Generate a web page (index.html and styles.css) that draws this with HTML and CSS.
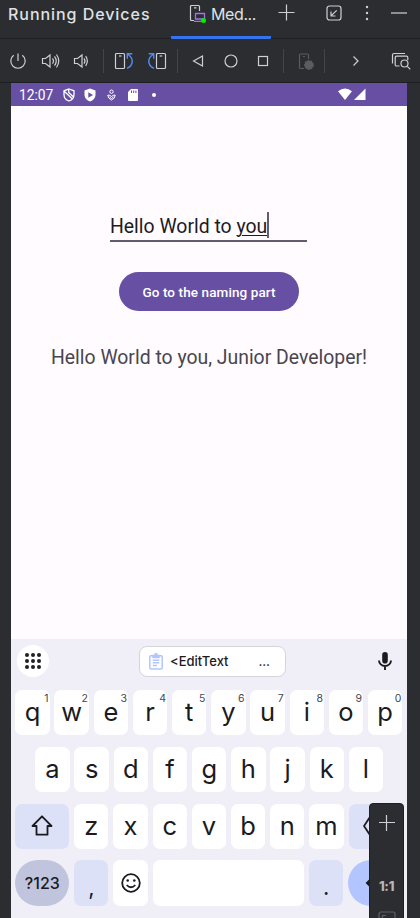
FILE: index.html
```html
<!DOCTYPE html>
<html lang="en">
<head>
<meta charset="utf-8">
<title>Running Devices</title>
<link rel="stylesheet" href="styles.css">
</head>
<body>
<div class="window">
  <header class="titlebar">
    <span class="title">Running Devices</span>
    <div class="tab">
      <svg width="18" height="20" viewBox="0 0 18 20" fill="none"><path d="M5 16.500H2.500Q1.500 16.500 1.500 15.500V2.500Q1.500 1.500 2.500 1.500H9.500Q10.500 1.500 10.500 2.500V7M5 3.800H7.500" stroke="#ced0d6" stroke-width="1.200"/><path d="M6.500 9.500H15.500V15H6.500zM5 17.300H12" stroke="#a571e6" stroke-width="1.300"/><circle cx="14.500" cy="16.500" r="2.500" fill="#00f000"/></svg>
      <span>Med...</span>
    </div>
    <svg class="add" width="18" height="18" viewBox="0 0 18 18" stroke="#ced0d6" stroke-width="1.200"><path d="M8.500 .5v16M.5 8.500h16"/></svg>
    <svg class="dock" width="16" height="16" viewBox="0 0 16 16" fill="none" stroke="#ced0d6" stroke-width="1.200"><rect x="1" y="1" width="14" height="14" rx="2.500"/><path d="M10.700 5.300L5.300 10.700M5 6.500V11H9.500"/></svg>
    <svg class="more" width="4" height="16" viewBox="0 0 4 16" fill="#ced0d6"><circle cx="2" cy="2" r="1.200"/><circle cx="2" cy="8" r="1.200"/><circle cx="2" cy="14" r="1.200"/></svg>
    <svg class="hide" width="16" height="4" viewBox="0 0 16 4" stroke="#ced0d6" stroke-width="1.200"><path d="M0 2h16"/></svg>
  </header>
  <nav class="toolbar">
    <svg class="power" viewBox="0 0 20 20"><path d="M10 2.500V10M5.700 4.300A7.200 7.200 0 1 0 14.300 4.300"/></svg>
    <svg class="g13" viewBox="0 0 20 20"><path d="M1.500 7.500H4.500L9 4V16L4.500 12.500H1.500zM11.500 7.300Q13.500 10 11.500 12.700M13.500 5.300Q17 10 13.500 14.700M15.500 3.500Q20 10 15.500 16.500"/></svg>
    <svg class="g10" viewBox="0 0 20 20"><path d="M3.500 7.500H6.500L11 4V16L6.500 12.500H3.500zM13 7.300Q15 10 13 12.700M14.700 5.200Q18 10 14.700 14.800"/></svg>
    <i class="sep g12"></i>
    <svg class="g10" viewBox="0 0 20 20"><rect x="1.500" y="2.500" width="9" height="15" rx="1"/><path d="M5 5H7.500"/><path class="blue" d="M13 17.300C19.500 14.500 20 7.500 14 3.500M18.300 2.700H13.300V7.700"/></svg>
    <svg class="g13" viewBox="0 0 20 20"><rect x="9.500" y="2.500" width="9" height="15" rx="1"/><path d="M12.700 5H15.200"/><path class="blue" d="M7 17.300C.5 14.500 0 7.500 6 3.500M1.700 2.700H6.700V7.700"/></svg>
    <i class="sep g10"></i>
    <svg class="g10" viewBox="0 0 20 20"><path d="M5.500 10L14.500 5V15z"/></svg>
    <svg class="g13" viewBox="0 0 20 20"><circle cx="10" cy="10" r="6"/></svg>
    <svg class="g12" viewBox="0 0 20 20"><rect x="5.500" y="5.500" width="9" height="9"/></svg>
    <i class="sep g10"></i>
    <svg class="g12 off" viewBox="0 0 20 20"><path d="M8 17.500H4.500Q3.500 17.500 3.500 16.500V4Q3.500 3 4.500 3H11.500Q12.500 3 12.500 4V8M7 5.500H9"/><circle cx="13" cy="14" r="4.300" fill="#5a5c60" stroke="#5a5c60" stroke-dasharray="2 1"/></svg>
    <i class="sep g8"></i>
    <svg class="g21" viewBox="0 0 20 20"><path d="M7.500 5.500L12 10L7.500 14.500"/></svg>
    <svg class="g25" viewBox="0 0 20 20"><path d="M1.500 12.500V4Q1.500 2.500 3 2.500H14M8.500 15H5.500Q4.200 15 4.200 13.700V6.500Q4.200 5.200 5.500 5.200H15.500Q16.800 5.200 16.800 6.500V9M16.300 15.300L19.300 18.300"/><circle cx="13.500" cy="12.500" r="3.500"/></svg>
  </nav>
  <main class="device">
    <div class="status">
      <span class="clock">12:07</span>
      <svg class="shield" width="12" height="14" viewBox="0 0 12 14" fill="none" stroke="#fff" stroke-width="1.300"><path d="M6 1L11 2.800V6.500C11 9.500 9 12 6 13C3 12 1 9.500 1 6.500V2.800zM1.500 3.500L9.500 11M5.700 1.500V4.500L10.500 9"/></svg>
      <svg class="play" width="12" height="14" viewBox="0 0 12 14"><path d="M6 .5L11.500 2.500V6.500C11.500 10 9 12.500 6 13.500C3 12.500.5 10 .5 6.500V2.500z" fill="#fff"/><path d="M4.300 4.200L9 7L4.300 9.800z" fill="#6750a4"/></svg>
      <svg class="person" width="9" height="12" viewBox="0 0 9 12" fill="none" stroke="#fff"><circle cx="4.500" cy="2.700" r="1.700"/><path d="M.8 6Q3 6 4.500 7.500Q6 6 8.200 6Q8.200 9.500 4.500 11Q.8 9.500 .8 6zM2.500 8L4.500 9.500L6.500 8"/></svg>
      <svg class="card" width="10" height="12" viewBox="0 0 10 12"><path d="M3 0H9Q10 0 10 1V11Q10 12 9 12H1Q0 12 0 11V3z" fill="#fff"/><path d="M3.500 1.500V4M5.700 1.500V4M7.900 1.500V4" stroke="#6750a4"/></svg>
      <i class="dot"></i>
      <svg class="signal" width="28" height="13" viewBox="0 0 28 13" fill="#fff"><path d="M0 3.200Q7 -2 14 3.200L7 12z"/><path d="M27.500 .5V12H16z"/></svg>
    </div>
    <section class="app">
      <div class="field"><span>Hello World to <u>you</u></span><i class="caret"></i></div>
      <button class="cta">Go to the naming part</button>
      <p class="message">Hello World to you, Junior Developer!</p>
    </section>
    <section class="keyboard">
      <div class="suggest">
        <div class="grid-btn"><svg width="16" height="16" viewBox="0 0 16 16" fill="#202124"><circle cx="2" cy="2" r="2"/><circle cx="8" cy="2" r="2"/><circle cx="14" cy="2" r="2"/><circle cx="2" cy="8" r="2"/><circle cx="8" cy="8" r="2"/><circle cx="14" cy="8" r="2"/><circle cx="2" cy="14" r="2"/><circle cx="8" cy="14" r="2"/><circle cx="14" cy="14" r="2"/></svg></div>
        <div class="clip"><svg width="14" height="17" viewBox="0 0 14 17" fill="none" stroke="#b3c5ff" stroke-width="1.500"><rect x=".8" y="2.800" width="12.400" height="13.200" rx="1"/><path d="M3.700 7.300H10.300M3.700 9.800H10.300M3.700 12.500H8"/><path d="M4 2.500H10V4.500H4z" fill="#b3c5ff"/><circle cx="7" cy="1.800" r="1.200"/></svg><span>&lt;EditText</span><span class="dots">...</span></div>
        <svg class="mic" width="14" height="18" viewBox="0 0 14 18"><rect x="4.200" y="0" width="5.600" height="11.500" rx="2.800" fill="#1b1b1f"/><path d="M1 8.500A6 5.500 0 0 0 13 8.500M7 14V18" fill="none" stroke="#1b1b1f" stroke-width="1.900"/></svg>
      </div>
      <div class="row">
        <div class="key">q<sup>1</sup></div><div class="key">w<sup>2</sup></div><div class="key">e<sup>3</sup></div><div class="key">r<sup>4</sup></div><div class="key">t<sup>5</sup></div><div class="key">y<sup>6</sup></div><div class="key">u<sup>7</sup></div><div class="key">i<sup>8</sup></div><div class="key">o<sup>9</sup></div><div class="key">p<sup>0</sup></div>
      </div>
      <div class="row inset">
        <div class="key">a</div><div class="key">s</div><div class="key">d</div><div class="key">f</div><div class="key">g</div><div class="key">h</div><div class="key">j</div><div class="key">k</div><div class="key">l</div>
      </div>
      <div class="row">
        <div class="key wide tint"><svg width="22" height="21" viewBox="0 0 22 21" fill="none" stroke="#1b1b1f" stroke-width="1.800"><path d="M11 1.300L20.500 11H16.500V19.700H5.500V11H1.500z" stroke-linejoin="round"/></svg></div><div class="key">z</div><div class="key">x</div><div class="key">c</div><div class="key">v</div><div class="key">b</div><div class="key">n</div><div class="key">m</div>
        <div class="key wide tint"><svg width="26" height="20" viewBox="0 0 26 20" fill="none" stroke="#1b1b1f" stroke-width="1.800"><path d="M7 1H25V19H7L1 10zM12 6L20 14M20 6L12 14"/></svg></div>
      </div>
      <div class="row last">
        <div class="key wide symbols">?123</div><div class="key tint low">,</div>
        <div class="key"><svg width="20" height="20" viewBox="0 0 20 20" fill="none" stroke="#1b1b1f" stroke-width="1.800"><circle cx="10" cy="10" r="8.800"/><path d="M5.700 12Q10 16.500 14.300 12"/><g fill="#1b1b1f" stroke="none"><circle cx="6.700" cy="7.500" r="1.300"/><circle cx="13.300" cy="7.500" r="1.300"/></g></svg></div>
        <div class="key space"></div><div class="key tint low">.</div>
        <div class="key wide enter"><svg width="20" height="16" viewBox="0 0 20 16" fill="none" stroke="#1b1b1f" stroke-width="2"><path d="M7 3L2 8L7 13M2 8H18V2"/></svg></div>
      </div>
    </section>
  </main>
  <aside class="zoom">
    <svg width="16" height="16" viewBox="0 0 16 16" stroke="#ced0d6" stroke-width="1.200"><path d="M7.500 0v16M0 7.500h16"/></svg>
    <i class="minus"></i>
    <b>1:1</b>
    <svg class="fit" width="18" height="16" viewBox="0 0 18 16" fill="none" stroke="#5f6166" stroke-width="1.200"><rect x="1" y="1" width="16" height="14" rx="2"/><path d="M4.500 8V4.500H8"/></svg>
  </aside>
</div>
</body>
</html>
```
FILE: styles.css
```css
* { box-sizing: border-box; }
body { margin: 0; background: #2b2d30; }
svg { display: block; flex: none; }
.window { position: relative; width: 420px; height: 918px; overflow: hidden; background: #2b2d30; font-family: Inter, sans-serif; }

.titlebar { display: flex; height: 39px; border-bottom: 1px solid #1e1f22; color: #dfe1e5; font-size: 16px; }
.title { width: 163px; margin-left: 8px; line-height: 29px; font-weight: 500; letter-spacing: .95px; white-space: nowrap; }
.tab { display: flex; gap: 4px; width: 100px; height: 39px; padding: 4px 0 0 18px; border-bottom: 3px solid #3574f0; border-radius: 1px; line-height: 21px; letter-spacing: -.4px; }
.add { margin: 4px 0 0 7px; }
.dock { margin: 5px 0 0 30px; }
.more { margin: 5px 0 0 23px; }
.hide { margin: 11px 0 0 22px; }

.toolbar { display: flex; align-items: center; height: 44px; padding-left: 8px; border-bottom: 1px solid #1e1f22; }
.toolbar svg { width: 20px; height: 20px; fill: none; stroke: #ced0d6; stroke-width: 1.2; }
.toolbar .blue { stroke: #548af7; stroke-width: 1.4; }
.toolbar .off { stroke: #5a5c60; }
.sep { width: 1px; height: 24px; background: #43454a; }
.g8 { margin-left: 8px; }
.g10 { margin-left: 10px; }
.g12 { margin-left: 12px; }
.g13 { margin-left: 13px; }
.g21 { margin-left: 21px; }
.g25 { margin-left: 25px; }

.device { display: flex; flex-direction: column; width: 396px; height: 835px; margin-left: 11px; background: #fffbff; }
.status { display: flex; align-items: center; height: 23px; padding: 0 41px 0 8px; background: #6750a4; color: #fff; }
.clock { width: 44px; font: 13.8px Roboto, sans-serif; }
.play { margin-left: 9px; }
.person { margin-left: 11px; }
.card { margin-left: 12px; }
.dot { width: 4px; height: 4px; margin-left: 14px; border-radius: 50%; background: #fff; }
.signal { margin-left: auto; }

.app { display: flex; flex-direction: column; align-items: center; height: 533px; font-family: Roboto, sans-serif; }
.field { display: flex; width: 197px; height: 31px; margin: 105px 1px 0 0; border-bottom: 2px solid #625b71; color: #1c1b1f; font-size: 19.4px; line-height: 31px; white-space: nowrap; }
.field u { text-decoration-thickness: 1px; text-underline-offset: 2px; }
.caret { width: 2px; height: 26px; margin-top: 1px; background: #625b71; }
.cta { width: 180px; height: 39px; margin: 30px 0 0; padding: 0; border: 0; border-radius: 20px; background: #6750a4; color: #fff; font: 500 13.5px Roboto, sans-serif; letter-spacing: .1px; }
.message { margin: 33px 0 0; color: #49454f; font-size: 19.4px; line-height: 28px; white-space: nowrap; }

.keyboard { height: 279px; padding: 5px 4px 0; background: #f0eff7; color: #1b1b1f; }
.suggest { display: flex; align-items: center; height: 33px; padding: 0 11px 0 2px; }
.grid-btn { display: grid; place-items: center; width: 32px; height: 32px; border-radius: 50%; background: #fff; }
.clip { display: flex; align-items: center; width: 147px; height: 31px; margin: 1px 0 0 90px; padding-left: 9px; border: 1px solid #d5d5dc; border-radius: 8px; background: #fff; font-size: 13px; font-weight: 500; }
.clip span { margin-left: 7px; }
.clip .dots { margin-left: 30px; letter-spacing: -.2px; }
.mic { margin-left: auto; }
.row { display: flex; gap: 4.9px; margin-top: 12px; padding-left: .3px; }
.suggest + .row { margin-top: 13px; }
.inset { margin-left: 20px; }
.key { position: relative; display: flex; flex: none; align-items: center; justify-content: center; width: 34.3px; height: 45px; padding-bottom: 2px; border-radius: 7px; background: #fff; font-size: 25.5px; }
.key sup { position: absolute; top: 3px; right: 1px; color: #46464f; font-size: 10.5px; line-height: 11px; }
.suggest + .row .key { padding-bottom: 1px; line-height: 26px; }
.wide { width: 54px; }
.tint { background: #dde1f8; }
.last { margin-top: 11px; }
.last .key { height: 46px; padding-bottom: 0; }
.symbols { border-radius: 23px; background: #c0c5dd; font-size: 16px; font-weight: 500; }
.last .low { padding-top: 7px; font-size: 22px; }
.space { width: 151.5px; }
.enter { border-radius: 23px; background: #b3c5ff; }

.zoom { position: absolute; top: 803px; left: 369px; display: flex; flex-direction: column; align-items: center; width: 35px; height: 125px; padding-top: 11px; border: 1px solid #1e1f22; border-radius: 4px; background: #2b2d30; color: #b4b6bb; }
.minus { width: 16px; height: 1px; margin-top: 23px; background: #5f6166; }
.zoom b { margin-top: 24px; font-size: 13px; font-weight: 800; line-height: 17px; letter-spacing: -.3px; }
.fit { margin-top: 16px; }
```
